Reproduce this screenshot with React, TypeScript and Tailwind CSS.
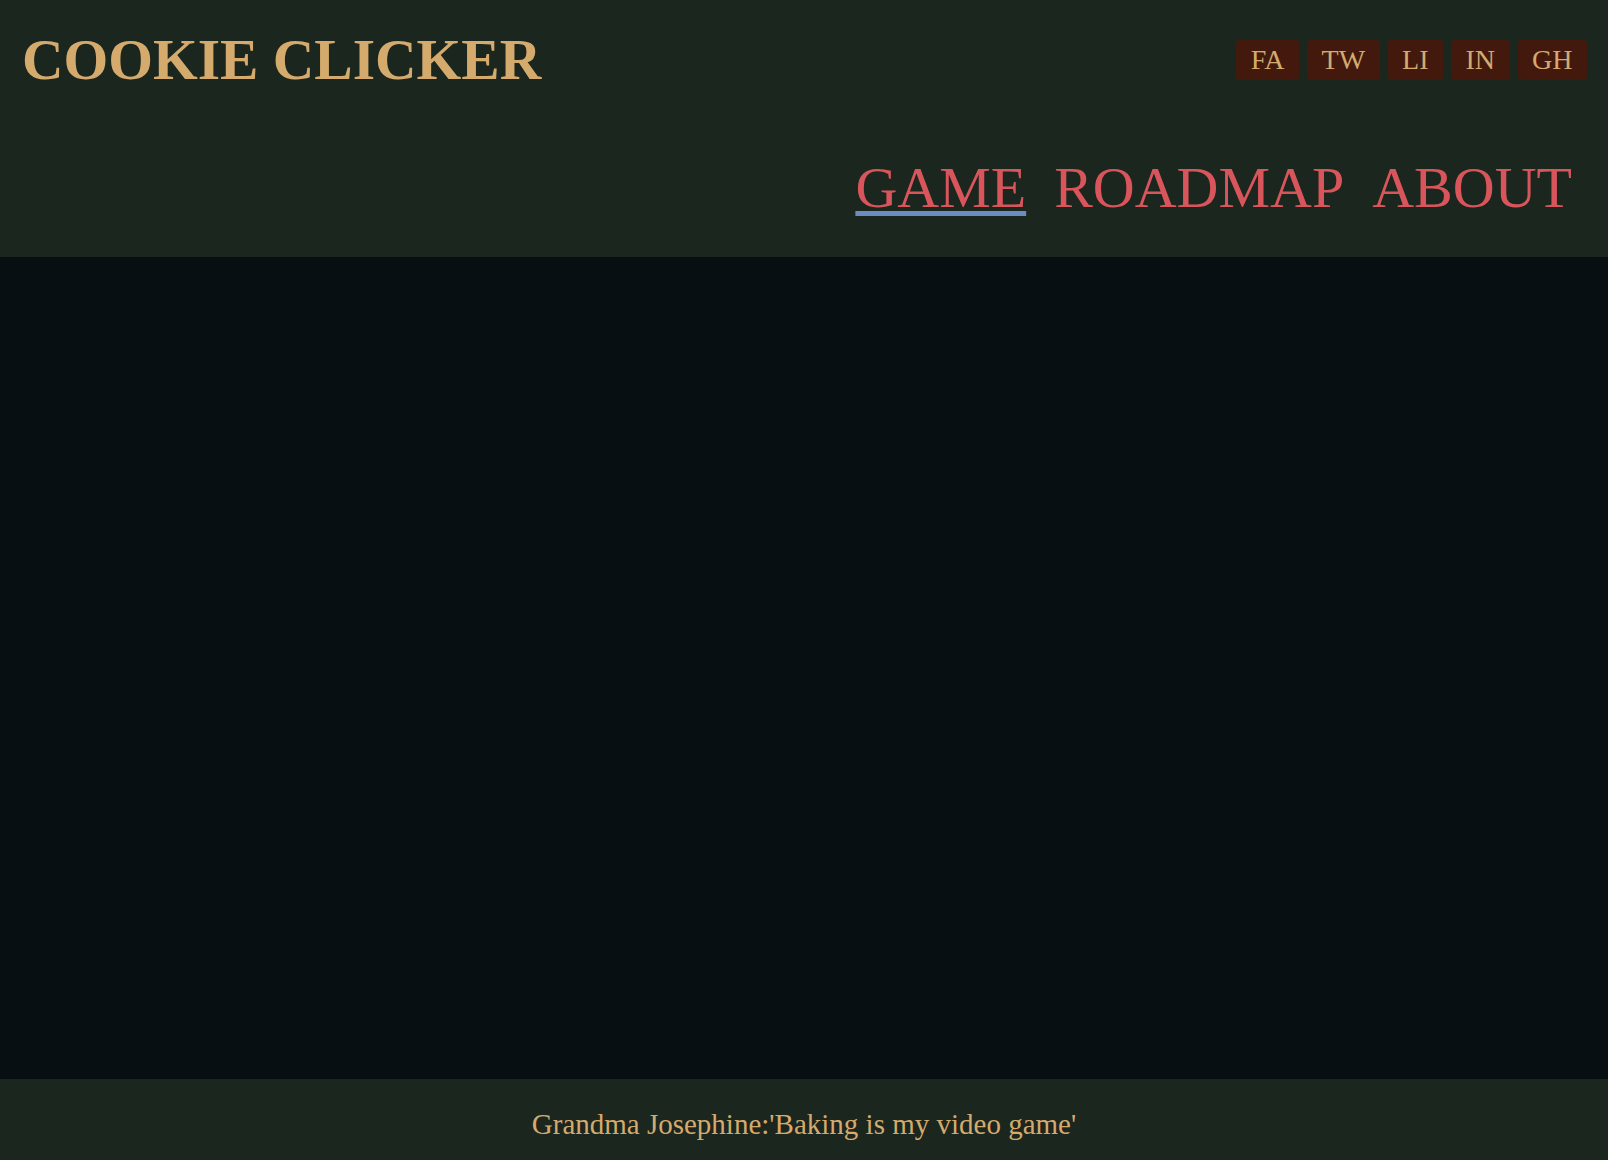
const socials = ["FA", "TW", "LI", "IN", "GH"];
const links = ["GAME", "ROADMAP", "ABOUT"];

const Header = () => {
    return (
        <header className="bg-[#1b261f] h-[257px] shrink-0 flex flex-col">
            <div className="flex justify-between items-start pl-[22px] pr-[21px] pt-[29px]">
                <h1 className="text-[57.5px] leading-[62px] font-bold text-[#d4aa6d]">
                    COOKIE CLICKER
                </h1>
                <ul className="flex gap-2 mt-[11px]">
                    {socials.map((s) => (
                        <li key={s}>
                            <a
                                href="#"
                                className="block px-[14.5px] py-1 rounded bg-[#43190d] text-[28px] leading-[32px] text-[#d4aa6d]"
                            >
                                {s}
                            </a>
                        </li>
                    ))}
                </ul>
            </div>
            <nav className="flex justify-end gap-[28px] pr-[36px] mt-[66px]">
                {links.map((link, i) => (
                    <a
                        key={link}
                        href="#"
                        className={
                            i === 0
                                ? "text-[58px] leading-[62px] text-[#d8555b] underline decoration-[5px] decoration-[#6b8cc0] underline-offset-[4px]"
                                : "text-[58px] leading-[62px] text-[#d8555b]"
                        }
                    >
                        {link}
                    </a>
                ))}
            </nav>
        </header>
    );
};

export default function App() {
    return (
        <div className="h-screen flex flex-col font-['Liberation_Serif',serif]">
            <Header />
            <main className="flex-1 bg-[#080f13]" />
            <footer className="bg-[#1b261f] h-[81px] shrink-0 pt-[30px] text-center">
                <p className="text-[29px] leading-[31px] text-[#d4aa6d]">
                    Grandma Josephine:'Baking is my video game'
                </p>
            </footer>
        </div>
    );
}
